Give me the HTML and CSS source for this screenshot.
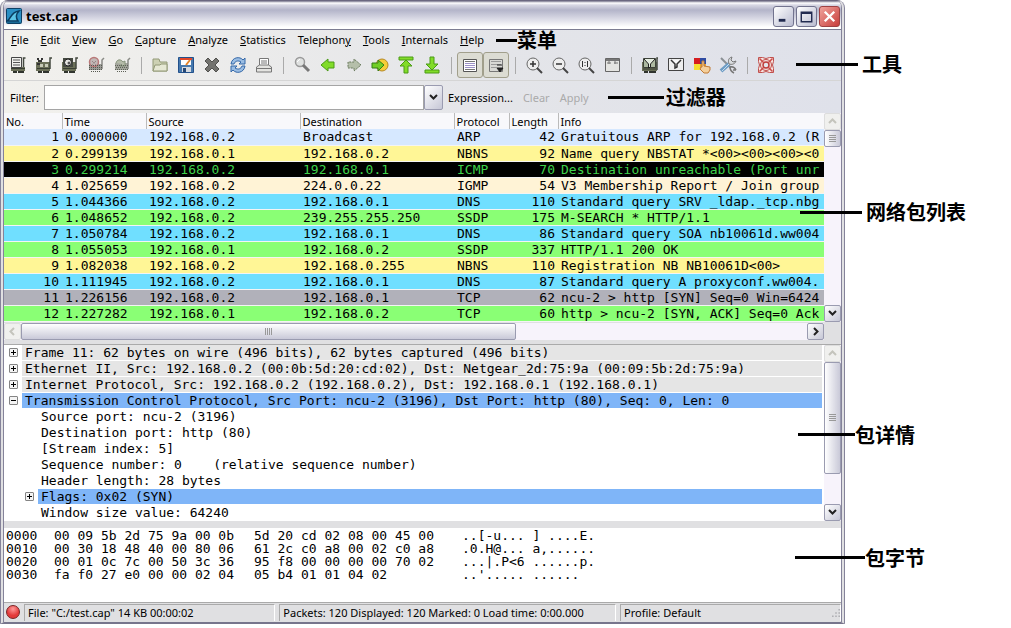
FILE: index.html
```
<!DOCTYPE html>
<html lang="zh-CN">
<head>
    <meta charset="UTF-8">
    <meta name="viewport" content="width=device-width, initial-scale=1.0">
    <title>test.cap</title>
    <link rel="stylesheet" href="styles.css">
</head>
<body>
<div class="window">
    <div class="titlebar">
        <svg class="logo" viewBox="0 0 16 16"><rect x=".5" y=".5" width="15" height="15" rx="1" fill="#2b8fc4" stroke="#0d4065"/><path d="M1 13C5 12 4 4 13 3c-3 3-3 7-1 10z" fill="#5cc3e6" stroke="#0b3c60" stroke-width="1.5"/><path d="M1 14.500h14" stroke="#1a6b98"/></svg>
        <h1 class="title">test.cap</h1>
        <button class="win_btn" aria-label="Minimize"><svg viewBox="0 0 20 20"><path d="M5 14h7" stroke="#222b50" stroke-width="3"/></svg></button>
        <button class="win_btn" aria-label="Maximize"><svg viewBox="0 0 20 20"><path d="M4.500 5.500h11v10h-11zM4 6.500h12" fill="none" stroke="#222b50" stroke-width="1.500"/></svg></button>
        <button class="win_btn win_close" aria-label="Close"><svg viewBox="0 0 20 20"><path d="M5 5l10 10M15 5L5 15" stroke="#fff" stroke-width="2.500"/></svg></button>
    </div>

    <div class="menubar">
        <button><u>F</u>ile</button>
        <button><u>E</u>dit</button>
        <button><u>V</u>iew</button>
        <button><u>G</u>o</button>
        <button><u>C</u>apture</button>
        <button><u>A</u>nalyze</button>
        <button><u>S</u>tatistics</button>
        <button>Telephon<u>y</u></button>
        <button><u>T</u>ools</button>
        <button><u>I</u>nternals</button>
        <button><u>H</u>elp</button>
        <div class="note note_menu"><i></i><b>菜单</b></div>
    </div>

    <div class="toolbar">
        <button aria-label="Interfaces"><svg viewBox="0 0 18 18"><path d="M2 11h14v4H2z" fill="#6b7058"/><path d="M16.500 2h-2v9" fill="none" stroke="#444a40" stroke-width="1.500"/><path d="M2.500 1.500h10v10h-10z" fill="#f2f2ee" stroke="#444"/><path d="M4 4h7M4 6.500h7M4 9h7" stroke="#555"/><path d="M2 12.500h14" stroke="#3a3f34"/><path d="M4 16h4M9 16h6" stroke="#30342e" stroke-width="2"/></svg></button>
        <button aria-label="Options"><svg viewBox="0 0 18 18"><path d="M1 6h14v9H1z" fill="#6b7058"/><path d="M17 2h-2v11" fill="none" stroke="#444a40" stroke-width="1.500"/><path d="M2 3h2M6 3h2M3 5h4M2 8h3" stroke="#333" stroke-width="2"/><path d="M5 8h3v3H5zM10 8h3v3h-3z" fill="#c8cbb8"/><path d="M2 12.500h13" stroke="#3a3f34"/><path d="M3 16h4M8 16h6" stroke="#30342e" stroke-width="2"/></svg></button>
        <button aria-label="Start"><svg viewBox="0 0 18 18"><path d="M1 6h14v9H1z" fill="#6b7058"/><path d="M17 2h-2v11" fill="none" stroke="#444a40" stroke-width="1.500"/><path d="M2 2h10v9H2z" fill="#454a41"/><circle cx="7" cy="6.500" r="3.500" fill="#e6e6e2" stroke="#222"/><circle cx="8" cy="7" r="1.500" fill="#555"/><path d="M2 12.500h13" stroke="#3a3f34"/><path d="M3 16h4M8 16h6" stroke="#30342e" stroke-width="2"/></svg></button>
        <button aria-label="Stop"><svg viewBox="0 0 18 18"><path d="M2 8h13v6H2z" fill="#9a9b95"/><path d="M17 2l-2 2v9" fill="none" stroke="#8a8b86" stroke-width="1.500"/><circle cx="7" cy="6" r="4.500" fill="#c2b8b6" stroke="#b97878" stroke-width="1.500"/><path d="M2 9.500h13M2 11.500h13M2 13.500h13M4 15.500h10" stroke="#55584f" stroke-dasharray="1 1"/><path d="M5 5l4 4M9 5l-4 4" stroke="#86706f" stroke-dasharray="1 1"/></svg></button>
        <button aria-label="Restart"><svg viewBox="0 0 18 18"><path d="M2 7h13v7H2z" fill="#a3a59c"/><path d="M17 2l-2 2v9" fill="none" stroke="#8a8b86" stroke-width="1.500"/><path d="M3 7c1-4 5-4 7-1l2-1v5H7l2-2" fill="#b5bba9" stroke="#85927a"/><path d="M2 9.500h13M3 11.500h12M2 13.500h13M4 15.500h10" stroke="#5d6157" stroke-dasharray="1 1"/></svg></button>
        <span class="sep"></span>
        <button aria-label="Open"><svg viewBox="0 0 18 18"><path d="M2 15V3h6l1 3h7v9z" fill="#cdd1b3" stroke="#929976"/><path d="M2 15l2-6h5l1-1h6v7z" fill="#e6e8d4" stroke="#929976"/></svg></button>
        <button aria-label="Save"><svg viewBox="0 0 18 18"><path d="M1.500 1.500h15v15h-15z" fill="#4779ae" stroke="#23518b"/><path d="M4 2h10v7H4z" fill="#fff"/><path d="M3 2h12v2H3z" fill="#e1482b"/><path d="M13 4l-4 5" stroke="#e58428" stroke-width="2"/><path d="M5 11h9v5H5z" fill="#d5dae0"/><path d="M6 12h3v4H6z" fill="#264775"/></svg></button>
        <button aria-label="Close file"><svg viewBox="0 0 18 18"><path d="M2 5l3-3 4 4 4-4 3 3-4 4 4 4-3 3-4-4-4 4-3-3 4-4z" fill="#73736f" stroke="#51514e"/></svg></button>
        <button aria-label="Reload"><svg viewBox="0 0 18 18"><path d="M2 8c1-7 9-8 12-4l2-2v6h-6l2-2C9 4 6 5 5 8zM16 10c-1 7-9 8-12 4l-2 2v-6h6l-2 2c3 2 6 1 7-2z" fill="#9abde3" stroke="#3568a8"/></svg></button>
        <button aria-label="Print"><svg viewBox="0 0 18 18"><path d="M4.500 9V2.500h9V9" fill="#fff" stroke="#777"/><path d="M1.500 11l3-2h9l3 2v5h-15z" fill="#e4e4e1" stroke="#777"/><path d="M6 5h6M6 7h6M2 12.500h14" stroke="#777"/></svg></button>
        <span class="sep"></span>
        <button aria-label="Find"><svg viewBox="0 0 18 18"><circle cx="7" cy="6" r="4.500" fill="#dfe1e0" stroke="#999" stroke-width="1.500"/><path d="M10 9l6 6" stroke="#777" stroke-width="3"/><path d="M4 6l3-3" stroke="#fff"/></svg></button>
        <button aria-label="Back"><svg viewBox="0 0 18 18"><path d="M2 9l7-6v3h6v6H9v3z" fill="#82dc29" stroke="#4a9b16"/></svg></button>
        <button aria-label="Forward"><svg viewBox="0 0 18 18"><path d="M16 9L9 3v3H3v6h6v3z" fill="#b5bfaa" stroke="#68795c" stroke-dasharray="2 1"/></svg></button>
        <button aria-label="Go to packet"><svg viewBox="0 0 18 18"><circle cx="11" cy="9" r="6" fill="#f5ce38" stroke="#b78925"/><path d="M13 9L7 4v3H1v5h6v3z" fill="#71ce26" stroke="#357d18"/></svg></button>
        <button aria-label="First packet"><svg viewBox="0 0 18 18"><path d="M2 1h14v3H2zM9 4l6 6h-4v7H7v-7H3z" fill="#82dc29" stroke="#4a9b16"/></svg></button>
        <button aria-label="Last packet"><svg viewBox="0 0 18 18"><path d="M2 14h14v3H2zM9 14L3 8h4V1h4v7h4z" fill="#82dc29" stroke="#4a9b16"/></svg></button>
        <span class="sep"></span>
        <button class="pressed" aria-pressed="true" aria-label="Colorize"><svg viewBox="0 0 18 18"><path d="M2.500 3.500h13v12h-13z" fill="#fff" stroke="#555"/><path d="M4 5.500h10M4 13.500h10" stroke="#777"/><path d="M4 7.500h10M4 9.500h10M4 11.500h10" stroke="#9c91c7"/></svg></button>
        <button class="pressed" aria-pressed="true" aria-label="Auto scroll"><svg viewBox="0 0 18 18"><path d="M2.500 3.500h13v12h-13z" fill="#d9d9d5" stroke="#777"/><path d="M4 5.500h10M4 8.500h10M4 11.500h6" stroke="#999"/><path d="M10 9h5M10 12h6l-3 4z" fill="#222" stroke="#222"/></svg></button>
        <span class="sep"></span>
        <button aria-label="Zoom in"><svg viewBox="0 0 18 18"><circle cx="8" cy="8" r="6" fill="#eee" stroke="#666"/><path d="M5 8h6M8 5v6" stroke="#333" stroke-width="1.500"/><path d="M12 12l5 5" stroke="#444" stroke-width="2"/></svg></button>
        <button aria-label="Zoom out"><svg viewBox="0 0 18 18"><circle cx="8" cy="8" r="6" fill="#eee" stroke="#666"/><path d="M5 8h6" stroke="#333" stroke-width="1.500"/><path d="M12 12l5 5" stroke="#444" stroke-width="2"/></svg></button>
        <button aria-label="Normal size"><svg viewBox="0 0 18 18"><circle cx="8" cy="8" r="6" fill="#eee" stroke="#666"/><path d="M5.500 5v6M10.500 5v6M8 6v1M8 9v1" stroke="#333"/><path d="M12 12l5 5" stroke="#444" stroke-width="2"/></svg></button>
        <button aria-label="Resize columns"><svg viewBox="0 0 18 18"><path d="M2.500 2.500h14v13h-14z" fill="#e5e5e2" stroke="#666"/><path d="M3 4h13" stroke="#777" stroke-width="2"/><path d="M6 5v3M12 5v3M4 7h4M11 7h4" stroke="#777"/></svg></button>
        <span class="sep"></span>
        <button aria-label="Capture filters"><svg viewBox="0 0 18 18"><path d="M1 6h15v9H1z" fill="#6b7058"/><path d="M17 2h-1v12" fill="none" stroke="#444a40" stroke-width="1.500"/><path d="M2.500 2.500h12v9h-12z" fill="#aebba2" stroke="#3d4239"/><path d="M3 3l4.500 5v4l2-1V8L14 3" fill="#e4ecdf" stroke="#222"/><path d="M2 13h13" stroke="#3a3f34"/><path d="M3 16h4M8 16h7" stroke="#30342e" stroke-width="2"/></svg></button>
        <button aria-label="Display filters"><svg viewBox="0 0 18 18"><path d="M1.500 2.500h15v12h-15z" fill="#eee" stroke="#444"/><path d="M4 4l4 4v4l2-1V8l4-4" fill="#f8f8f8" stroke="#333" stroke-width="1.500"/></svg></button>
        <button aria-label="Coloring rules"><svg viewBox="0 0 18 18"><path d="M1 2h6v6H1z" fill="#d51d20"/><path d="M7 2h6v6H7z" fill="#2f4ba2"/><path d="M1 8h6v6H1z" fill="#f5df30"/><path d="M7 8h6v6H7z" fill="#e9a032"/><path d="M9 11V5h2v5l6 1v3l-2 3h-4l-4-4 1-2z" fill="#f4cf9c" stroke="#c17a35"/></svg></button>
        <button aria-label="Preferences"><svg viewBox="0 0 18 18"><path d="M2 2l3 3 7 7" fill="none" stroke="#8a8f94" stroke-width="2"/><path d="M2 15l8-7" stroke="#6d9cc4" stroke-width="4"/><path d="M3 15l7-7" stroke="#c3dbee"/><path d="M13 1c-4 1-4 4-3 7 3 1 6 0 7-3l-3 1-2-2z" fill="#d9dcdf" stroke="#777"/><path d="M11 11c3-1 5 1 6 3M11 11c0 3 2 5 4 6M14 14h3" fill="none" stroke="#777" stroke-width="1.500"/></svg></button>
        <span class="sep"></span>
        <button aria-label="Help contents"><svg viewBox="0 0 18 18"><path d="M1.500 1.500h4l3.500 1 3.500-1h4v4l-1 3.500 1 3.500v4h-4l-3.500-1-3.500 1h-4v-4l1-3.500-1-3.500z" fill="#f6e2df" stroke="#c0504d"/><circle cx="9" cy="9" r="5.500" fill="none" stroke="#c0504d"/><circle cx="9" cy="9" r="3" fill="#e4e5ea" stroke="#bd3c3a" stroke-width="1.500"/><path d="M2.500 2.500l4 4M15.500 2.500l-4 4M2.500 15.500l4-4M15.500 15.500l-4-4" stroke="#cb4a47" stroke-width="1.500"/></svg></button>
        <div class="note note_side note_tools"><i></i><b>工具</b></div>
    </div>

    <div class="filterbar">
        <label for="filter">Filter:</label>
        <div class="combo">
            <input id="filter" type="text">
            <button class="arrow" aria-label="Filter history"><svg viewBox="0 0 9 9"><path d="M1 2l3.500 3.500L8 2" /></svg></button>
        </div>
        <button class="text_btn">Expression...</button>
        <button class="text_btn" disabled>Clear</button>
        <button class="text_btn" disabled>Apply</button>
        <div class="note note_filter"><i></i><b>过滤器</b></div>
    </div>

    <div class="pane packets">
        <div class="packets_view">
            <table>
                <colgroup><col class="c_no"><col class="c_time"><col class="c_addr"><col class="c_addr"><col class="c_proto"><col class="c_len"><col></colgroup>
                <thead>
                    <tr><th>No.</th><th>Time</th><th>Source</th><th>Destination</th><th>Protocol</th><th>Length</th><th>Info</th></tr>
                </thead>
                <tbody>
                    <tr class="arp"><td>1</td><td>0.000000</td><td>192.168.0.2</td><td>Broadcast</td><td>ARP</td><td>42</td><td>Gratuitous ARP for 192.168.0.2 (R</td></tr>
                    <tr class="nbns"><td>2</td><td>0.299139</td><td>192.168.0.1</td><td>192.168.0.2</td><td>NBNS</td><td>92</td><td>Name query NBSTAT *&lt;00&gt;&lt;00&gt;&lt;00&gt;&lt;0</td></tr>
                    <tr class="icmp"><td>3</td><td>0.299214</td><td>192.168.0.2</td><td>192.168.0.1</td><td>ICMP</td><td>70</td><td>Destination unreachable (Port unr</td></tr>
                    <tr class="igmp"><td>4</td><td>1.025659</td><td>192.168.0.2</td><td>224.0.0.22</td><td>IGMP</td><td>54</td><td>V3 Membership Report / Join group</td></tr>
                    <tr class="dns"><td>5</td><td>1.044366</td><td>192.168.0.2</td><td>192.168.0.1</td><td>DNS</td><td>110</td><td>Standard query SRV _ldap._tcp.nbg</td></tr>
                    <tr class="http"><td>6</td><td>1.048652</td><td>192.168.0.2</td><td>239.255.255.250</td><td>SSDP</td><td>175</td><td>M-SEARCH * HTTP/1.1</td></tr>
                    <tr class="dns"><td>7</td><td>1.050784</td><td>192.168.0.2</td><td>192.168.0.1</td><td>DNS</td><td>86</td><td>Standard query SOA nb10061d.ww004</td></tr>
                    <tr class="http"><td>8</td><td>1.055053</td><td>192.168.0.1</td><td>192.168.0.2</td><td>SSDP</td><td>337</td><td>HTTP/1.1 200 OK</td></tr>
                    <tr class="nbns"><td>9</td><td>1.082038</td><td>192.168.0.2</td><td>192.168.0.255</td><td>NBNS</td><td>110</td><td>Registration NB NB10061D&lt;00&gt;</td></tr>
                    <tr class="dns"><td>10</td><td>1.111945</td><td>192.168.0.2</td><td>192.168.0.1</td><td>DNS</td><td>87</td><td>Standard query A proxyconf.ww004.</td></tr>
                    <tr class="syn"><td>11</td><td>1.226156</td><td>192.168.0.2</td><td>192.168.0.1</td><td>TCP</td><td>62</td><td>ncu-2 &gt; http [SYN] Seq=0 Win=6424</td></tr>
                    <tr class="http"><td>12</td><td>1.227282</td><td>192.168.0.1</td><td>192.168.0.2</td><td>TCP</td><td>60</td><td>http &gt; ncu-2 [SYN, ACK] Seq=0 Ack</td></tr>
                </tbody>
            </table>
        </div>
        <div class="scroll">
            <button class="arrow off" aria-label="Scroll up"><svg viewBox="0 0 9 9"><path d="M1 6l3.500-3.500L8 6"/></svg></button>
            <div class="track"><div class="thumb thumb_short"></div></div>
            <button class="arrow" aria-label="Scroll down"><svg viewBox="0 0 9 9"><path d="M1 2l3.500 3.500L8 2"/></svg></button>
        </div>
        <div class="scroll scroll_h">
            <button class="arrow off" aria-label="Scroll left"><svg viewBox="0 0 9 9"><path d="M6 1L2.500 4.500 6 8"/></svg></button>
            <div class="track"><div class="thumb thumb_h"></div></div>
            <button class="arrow" aria-label="Scroll right"><svg viewBox="0 0 9 9"><path d="M3 1l3.500 3.500L3 8"/></svg></button>
        </div>
        <div class="note note_side note_list"><i></i><b>网络包列表</b></div>
    </div>

    <div class="pane details">
        <ul class="tree">
            <li><button class="exp" aria-label="Expand"></button><span class="proto">Frame 11: 62 bytes on wire (496 bits), 62 bytes captured (496 bits)</span></li>
            <li><button class="exp" aria-label="Expand"></button><span class="proto">Ethernet II, Src: 192.168.0.2 (00:0b:5d:20:cd:02), Dst: Netgear_2d:75:9a (00:09:5b:2d:75:9a)</span></li>
            <li><button class="exp" aria-label="Expand"></button><span class="proto">Internet Protocol, Src: 192.168.0.2 (192.168.0.2), Dst: 192.168.0.1 (192.168.0.1)</span></li>
            <li><button class="exp open" aria-label="Collapse"></button><span class="selected">Transmission Control Protocol, Src Port: ncu-2 (3196), Dst Port: http (80), Seq: 0, Len: 0</span></li>
            <li class="field"><span>Source port: ncu-2 (3196)</span></li>
            <li class="field"><span>Destination port: http (80)</span></li>
            <li class="field"><span>[Stream index: 5]</span></li>
            <li class="field"><span>Sequence number: 0    (relative sequence number)</span></li>
            <li class="field"><span>Header length: 28 bytes</span></li>
            <li class="sub"><button class="exp" aria-label="Expand"></button><span class="selected">Flags: 0x02 (SYN)</span></li>
            <li class="field"><span>Window size value: 64240</span></li>
        </ul>
        <div class="scroll">
            <button class="arrow off" aria-label="Scroll up"><svg viewBox="0 0 9 9"><path d="M1 6l3.500-3.500L8 6"/></svg></button>
            <div class="track"><div class="thumb thumb_long"></div></div>
            <button class="arrow" aria-label="Scroll down"><svg viewBox="0 0 9 9"><path d="M1 2l3.500 3.500L8 2"/></svg></button>
        </div>
        <div class="note note_side note_details"><i></i><b>包详情</b></div>
    </div>

    <div class="pane bytes">
        <pre>0000
0010
0020
0030</pre>
        <pre>00 09 5b 2d 75 9a 00 0b
00 30 18 48 40 00 80 06
00 01 0c 7c 00 50 3c 36
fa f0 27 e0 00 00 02 04</pre>
        <pre>5d 20 cd 02 08 00 45 00
61 2c c0 a8 00 02 c0 a8
95 f8 00 00 00 00 70 02
05 b4 01 01 04 02</pre>
        <pre>..[-u... ] ....E.
.0.H@... a,......
...|.P&lt;6 ......p.
..'..... ......</pre>
        <div class="note note_side note_bytes"><i></i><b>包字节</b></div>
    </div>

    <div class="statusbar">
        <button class="expert" aria-label="Expert info"></button>
        <span class="status status_file">File: "C:/test.cap" 14 KB 00:00:02</span>
        <span class="status status_packets">Packets: 120 Displayed: 120 Marked: 0 Load time: 0:00.000</span>
        <span class="status status_profile">Profile: Default
            <svg class="grip" viewBox="0 0 10 10"><path d="M8 1h2M8 5h2M4 5h2M8 9h2M4 9h2M0 9h2" stroke="#b0b0b4" stroke-width="2"/></svg>
        </span>
    </div>
</div>
</body>
</html>
```
FILE: styles.css
```
* {
    box-sizing: border-box;
    margin: 0;
    padding: 0;
}
body {
    background: #fff;
    font-family: "Noto Sans", sans-serif;
    font-size: 11px;
    color: #000;
    padding-right: 166px;
}
button {
    font: inherit;
    color: inherit;
    background: none;
    border: 0;
}
.window {
    border: 1px solid #6b6880;
    border-width: 1px 4px 2px;
    border-color: #6b6880 #85839a #77758c;
    border-right-style: double;
    border-left-style: double;
    border-radius: 8px 8px 0 0;
    background: #e0e0e2;
}

/* title bar */
.titlebar {
    display: flex;
    align-items: center;
    gap: 2px;
    height: 29px;
    padding: 2px 1px 0 2px;
    border-bottom: 1px solid #7c7c92;
    border-radius: 5px 5px 0 0;
    background: linear-gradient(#77758c, #fff 2px, #d8d8e4 4px, #b3b4c9 9px, #e3e3ec 20px, #fff 26px);
}
.logo {
    width: 16px;
    height: 16px;
}
.title {
    flex: 1;
    padding-left: 2px;
    font-family: "Open Sans", sans-serif;
    font-size: 13px;
    line-height: 18px;
}
.win_btn {
    width: 21px;
    height: 21px;
    border: 1px solid #72738e;
    border-radius: 3px;
    background: linear-gradient(135deg, #fff, #b9bbd0);
}
.win_btn svg {
    display: block;
    width: 19px;
    height: 19px;
}
.win_close {
    border-color: #9e4243;
    background: linear-gradient(135deg, #f0a39c, #c83d3b);
}

/* menu, tools, filter */
.menubar,
.toolbar,
.filterbar {
    display: flex;
    align-items: center;
    position: relative;
    background: linear-gradient(90deg, #f2f1ed, #e4e5e9 60%, #dfe1ea);
}
.menubar {
    height: 20px;
    gap: 12px;
    padding-left: 7px;
}
.menubar button {
    line-height: 18px;
}
.toolbar {
    height: 30px;
    padding-left: 1px;
}
.toolbar button {
    display: flex;
    justify-content: center;
    align-items: center;
    width: 26px;
    height: 26px;
}
.toolbar svg {
    width: 18px;
    height: 18px;
}
.toolbar .pressed {
    border: 1px solid #a19f8c;
    border-radius: 3px;
    background: #dcdcd3;
}
.sep {
    width: 12px;
    height: 17px;
    background: linear-gradient(#aaa, #aaa) center / 1px 100% no-repeat;
}
.filterbar {
    height: 33px;
    padding-left: 6px;
    border-top: 1px solid #d5d5d5;
}
.filterbar label {
    width: 34px;
}
.combo {
    display: flex;
    flex: 0 1 399px;
    height: 25px;
}
.combo input {
    flex: 1;
    min-width: 0;
    padding: 0 4px;
    border: 1px solid #a5a5a5;
    background: #fff;
    font: inherit;
}
.text_btn {
    padding: 0 5px;
}
.text_btn:disabled {
    color: #aaa;
}

/* arrows and scrollbars */
.arrow {
    display: flex;
    justify-content: center;
    align-items: center;
    width: 17px;
    height: 17px;
    border: 1px solid #9a9bb0;
    border-radius: 2px;
    background: linear-gradient(135deg, #fff, #c6c7d6);
}
.arrow svg {
    width: 9px;
    height: 9px;
    fill: none;
    stroke: #222;
    stroke-width: 2;
}
.arrow.off {
    border-color: #ddd;
    background: #f0f0ee;
}
.arrow.off svg {
    stroke: #c4c4bc;
}
.combo .arrow {
    width: 19px;
    height: 25px;
}
.scroll {
    display: flex;
    flex-direction: column;
    width: 17px;
    background: #f7f3fb;
}
.track {
    flex: 1;
}
.thumb {
    border: 1px solid #9a9bb0;
    border-radius: 2px;
    background: linear-gradient(90deg, #fff, #c9c9d8);
    display: flex;
    justify-content: center;
    align-items: center;
}
.thumb::before {
    content: "";
    width: 7px;
    height: 7px;
    background: repeating-linear-gradient(#999 0 1px, transparent 1px 2px);
}
.thumb_short {
    height: 17px;
}
.thumb_long {
    height: 79%;
}
.scroll_h {
    flex-direction: row;
    width: auto;
    height: 17px;
}
.thumb_h {
    width: 63%;
    height: 17px;
    background: linear-gradient(#fff, #c9c9d8);
}
.thumb_h::before {
    background: repeating-linear-gradient(90deg, #999 0 1px, transparent 1px 2px);
}

/* panes */
.pane {
    position: relative;
    font-family: "DejaVu Sans Mono", monospace;
    font-size: 13px;
    background: #fff;
}
.packets {
    display: grid;
    grid-template-columns: minmax(0, 1fr) 17px;
    row-gap: 1px;
    padding-bottom: 4px;
    background: #e0e0e2;
}
.packets_view {
    overflow: hidden;
    background: #fff;
}
.packets table {
    width: 100%;
    table-layout: fixed;
    border-collapse: collapse;
}
.c_no {
    width: 58px;
}
.c_time {
    width: 84px;
}
.c_addr {
    width: 154px;
}
.c_proto {
    width: 55px;
}
.c_len {
    width: 49px;
}
.packets th {
    height: 16px;
    padding: 0 2px;
    border-right: 1px solid #bbb;
    background: #f8f8fb;
    font-family: "Noto Sans", sans-serif;
    font-size: 11px;
    font-weight: 400;
    line-height: 15px;
    text-align: left;
}
.packets th:last-child {
    border-right: 0;
}
.packets td {
    height: 16px;
    padding: 0 3px;
    border-bottom: 1px solid #f4f4f4;
    line-height: 15px;
    white-space: nowrap;
}
.packets td:first-child,
.packets td:nth-child(6) {
    text-align: right;
}
.arp {
    background: #d6e8ff;
}
.nbns {
    background: #fff696;
}
.icmp {
    background: #000;
    color: #3fd24c;
}
.igmp {
    background: #fff3d6;
}
.dns {
    background: #70dfff;
}
.http {
    background: #8aff75;
}
.syn {
    background: #b1b1ba;
}
.details {
    display: flex;
    border-top: 1px solid #aaa;
}
.tree {
    flex: 1;
    min-width: 0;
    padding: 0 2px 0 5px;
    list-style: none;
}
.tree li {
    display: flex;
    align-items: center;
    gap: 4px;
    height: 16px;
}
.tree span {
    flex: 1;
    min-width: 0;
    padding-left: 3px;
    line-height: 15px;
    white-space: pre;
    overflow: hidden;
}
.tree .field {
    padding-left: 29px;
}
.tree .sub {
    padding-left: 16px;
}
.proto {
    background: #e5e5e5;
}
.selected {
    background: #7fb5f8;
}
.exp {
    width: 9px;
    height: 9px;
    border: 1px solid #848484;
    border-radius: 1px;
    background:
        linear-gradient(#000, #000) center / 5px 1px no-repeat,
        linear-gradient(#000, #000) center / 1px 5px no-repeat,
        #f4f4f4;
}
.exp.open {
    background: linear-gradient(#000, #000) center / 5px 1px no-repeat, #f4f4f4;
}
.bytes {
    display: grid;
    grid-template-columns: 48px 200px 208px 1fr;
    min-height: 82px;
    padding: 1px 2px 0;
    border-top: 7px solid #e0e0e2;
    border-bottom: 1px solid #aaa;
}
.bytes pre {
    font-family: inherit;
    line-height: 13px;
}

/* status bar */
.statusbar {
    display: flex;
    align-items: center;
    gap: 4px;
    height: 19px;
    padding-left: 2px;
}
.expert {
    width: 14px;
    height: 14px;
    border: 1px solid #7a2222;
    border-radius: 50%;
    background: radial-gradient(circle at 50% 25%, #f99, #e33a3a 60%);
}
.status {
    height: 17px;
    padding-left: 3px;
    border-top: 1px solid #aaa;
    border-left: 1px solid #aaa;
    border-right: 1px solid #fff;
    line-height: 16px;
    white-space: nowrap;
    overflow: hidden;
}
.status_file {
    flex: 251;
}
.status_packets {
    flex: 338;
}
.status_profile {
    display: flex;
    justify-content: space-between;
    align-items: center;
    flex: 220;
}
.grip {
    width: 8px;
    height: 8px;
}

/* callouts */
.note {
    display: flex;
    align-items: center;
    font-family: "Noto Sans CJK SC", sans-serif;
    font-size: 20px;
    line-height: 24px;
    white-space: nowrap;
}
.note i {
    width: 62px;
    height: 3px;
    background: #000;
}
.note b {
    font-weight: 700;
}
.note_menu i {
    width: 21px;
}
.note_filter {
    gap: 2px;
    margin-left: 14px;
}
.note_filter i {
    width: 56px;
}
.note_side {
    position: absolute;
    left: calc(100% - 45px);
    z-index: 1;
    gap: 4px;
}
.note_tools {
    top: 2px;
}
.note_list {
    left: calc(100% - 41px);
    top: 87px;
}
.note_details {
    left: calc(100% - 43px);
    top: 78px;
    gap: 0;
}
.note_details i {
    width: 57px;
}
.note_bytes {
    left: calc(100% - 46px);
    top: 18px;
    gap: 0;
}
.note_bytes i {
    width: 70px;
}
```
